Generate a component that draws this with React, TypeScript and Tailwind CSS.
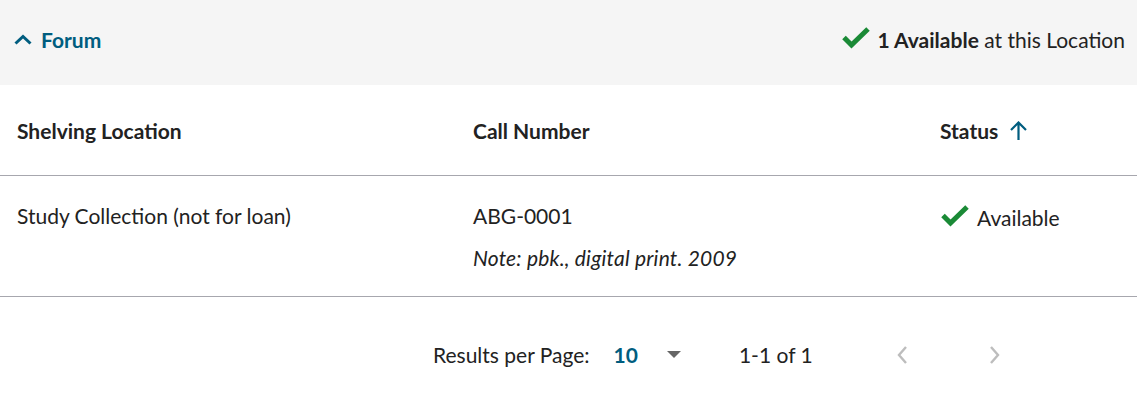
function Check({ className }: { className?: string }) {
  return (
    <svg viewBox="0 0 28 24" className={className} fill="none">
      <path d="M2 11.5 L9.5 19 L26 3" stroke="#1a8a36" strokeWidth="5" />
    </svg>
  )
}

function CaretUp() {
  return (
    <svg viewBox="0 0 18 11" className="w-[18px] h-[11px]" fill="none">
      <path d="M1.5 9.5 L9 2.5 L16.5 9.5" stroke="currentColor" strokeWidth="3" />
    </svg>
  )
}

function SortArrow() {
  return (
    <svg viewBox="0 0 17 19" className="w-[17px] h-[19px] text-[#005d7f]" fill="none">
      <path d="M8.5 2 V19 M1 9 L8.5 1.5 L16 9" stroke="currentColor" strokeWidth="2.2" />
    </svg>
  )
}

function Chevron({ dir }: { dir: "left" | "right" }) {
  return (
    <svg viewBox="0 0 10 18" className="w-[10px] h-[18px]" fill="none">
      <path
        d={dir === "left" ? "M9 1 L2 9 L9 17" : "M1 1 L8 9 L1 17"}
        stroke="#bdbdbd"
        strokeWidth="2.4"
      />
    </svg>
  )
}

export default function App() {
  return (
    <div className="w-[1137px] h-[398px] bg-white text-[#222] font-['Lato',sans-serif] text-[21px]">
      {/* Location header */}
      <div className="h-[85px] bg-[#f5f5f5] flex items-center justify-between pl-[14px] pr-[12px] pb-[6px]">
        <button className="flex items-center gap-[9px] text-[#005d7f] font-bold">
          <CaretUp />
          <span>Forum</span>
        </button>
        <div className="flex items-center gap-[8px]">
          <Check className="w-[28px] h-[24px] -mt-[3px]" />
          <span>
            <span className="font-bold">1 Available</span> at this Location
          </span>
        </div>
      </div>

      {/* Table */}
      <table className="w-full border-collapse">
        <thead>
          <tr className="h-[90px] border-b border-[#a7a7ae]">
            <th className="w-[457px] pl-[17px] pt-[2px] text-left font-bold">Shelving Location</th>
            <th className="w-[467px] pl-[16px] pt-[2px] text-left font-bold">Call Number</th>
            <th className="pl-[16px] pt-[2px] text-left font-bold">
              <span className="inline-flex items-center gap-[12px]">
                Status <SortArrow />
              </span>
            </th>
          </tr>
        </thead>
        <tbody>
          <tr className="h-[121px] border-b border-[#a7a7ae] align-top">
            <td className="pl-[17px] pt-[24px]">Study Collection (not for loan)</td>
            <td className="pl-[16px] pt-[24px]">
              <div>ABG-0001</div>
              <div className="italic mt-[11px] tracking-[0.2px]">Note: pbk., digital print. 2009</div>
            </td>
            <td className="pl-[17px] pt-[26px]">
              <span className="flex items-center gap-[8px]">
                <Check className="w-[28px] h-[24px] -mt-[3px]" />
                Available
              </span>
            </td>
          </tr>
        </tbody>
      </table>

      {/* Pagination */}
      <div className="flex items-center h-[116px] pl-[433px]">
        <span>Results per Page:</span>
        <span className="ml-[24px] font-bold text-[#005d7f]">10</span>
        <span className="ml-[29px] w-0 h-0 border-l-[7px] border-r-[7px] border-t-[7px] border-l-transparent border-r-transparent border-t-[#666]" />
        <span className="ml-[58px]">1-1 of 1</span>
        <span className="ml-[84px] flex"><Chevron dir="left" /></span>
        <span className="ml-[83px] flex"><Chevron dir="right" /></span>
      </div>
    </div>
  )
}
